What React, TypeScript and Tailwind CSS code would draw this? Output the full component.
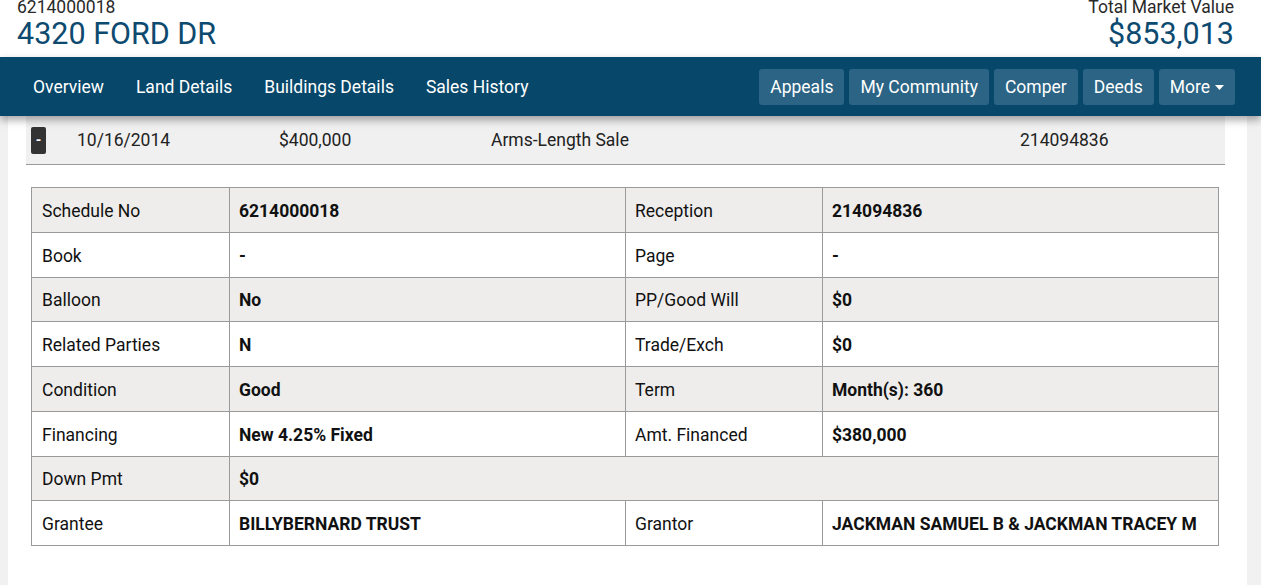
const navTabs = ["Overview", "Land Details", "Buildings Details", "Sales History"];
const navButtons = ["Appeals", "My Community", "Comper", "Deeds"];

type Row = { cells: [string, string] | [string, string, string, string] };

const rows: Row[] = [
  { cells: ["Schedule No", "6214000018", "Reception", "214094836"] },
  { cells: ["Book", "-", "Page", "-"] },
  { cells: ["Balloon", "No", "PP/Good Will", "$0"] },
  { cells: ["Related Parties", "N", "Trade/Exch", "$0"] },
  { cells: ["Condition", "Good", "Term", "Month(s): 360"] },
  { cells: ["Financing", "New 4.25% Fixed", "Amt. Financed", "$380,000"] },
  { cells: ["Down Pmt", "$0"] },
  { cells: ["Grantee", "BILLYBERNARD TRUST", "Grantor", "JACKMAN SAMUEL B & JACKMAN TRACEY M"] },
];

function SaleDetail() {
  return (
    <table className="w-[1187px] table-fixed border-collapse text-[17.5px] text-[#111]">
      <colgroup>
        <col className="w-[198px]" />
        <col className="w-[396px]" />
        <col className="w-[197px]" />
        <col className="w-[396px]" />
      </colgroup>
      <tbody>
        {rows.map((r, i) => (
          <tr key={i} className={i % 2 === 0 ? "bg-[#eeedec]" : "bg-white"}>
            <td className="h-[44.75px] border border-[#9a9a9a] px-[10px] pt-[2px]">{r.cells[0]}</td>
            {r.cells.length === 2 ? (
              <td colSpan={3} className="border border-[#9a9a9a] px-[9px] pt-[2px] font-bold">
                {r.cells[1]}
              </td>
            ) : (
              <>
                <td className="border border-[#9a9a9a] px-[9px] pt-[2px] font-bold">{r.cells[1]}</td>
                <td className="border border-[#9a9a9a] px-[9px] pt-[2px]">{r.cells[2]}</td>
                <td className="whitespace-nowrap border border-[#9a9a9a] px-[9px] pt-[2px] font-bold">
                  {r.cells[3]}
                </td>
              </>
            )}
          </tr>
        ))}
      </tbody>
    </table>
  );
}

export default function App() {
  return (
    <div
      className="h-[585px] w-[1261px] overflow-hidden bg-[#f1f1f1]"
      style={{ fontFamily: "Roboto, 'Liberation Sans', sans-serif" }}
    >
      {/* title strip */}
      <header className="flex h-[57px] items-start justify-between bg-white pl-[17px] pr-[27px]">
        <div className="flex flex-col">
          <span className="mt-[-2px] text-[17.5px] leading-[19px] text-[#2a2a2a]">6214000018</span>
          <span className="text-[30.5px] leading-[33px] text-[#0d4a70]">4320 FORD DR</span>
        </div>
        <div className="flex flex-col items-end">
          <span className="mt-[-2px] text-[17.5px] leading-[19px] text-[#2a2a2a]">Total Market Value</span>
          <span className="text-[30.5px] leading-[33px] text-[#0d4a70]">$853,013</span>
        </div>
      </header>

      {/* nav bar */}
      <nav className="relative z-10 flex h-[59px] items-center justify-between bg-[#06476a] pl-[33px] pr-[26px] shadow-[0_4px_8px_rgba(0,0,0,0.35)]">
        <div className="flex items-center gap-[32px] pt-[2px]">
          {navTabs.map((t) => (
            <span key={t} className="text-[17.5px] text-white">
              {t}
            </span>
          ))}
        </div>
        <div className="flex items-center gap-[5px]">
          {navButtons.map((b) => (
            <span
              key={b}
              className="flex h-[36px] items-center rounded-[3px] bg-[#2b6484] px-[11px] pt-[2px] text-[17.5px] text-white"
            >
              {b}
            </span>
          ))}
          <span className="flex h-[36px] items-center gap-[5px] rounded-[3px] bg-[#2b6484] px-[11px] pt-[2px] text-[17.5px] text-white">
            More
            <svg width="9" height="5" viewBox="0 0 9 5">
              <path d="M0 0h9L4.5 5z" fill="white" />
            </svg>
          </span>
        </div>
      </nav>

      {/* content card */}
      <main className="ml-[8px] h-[469px] w-[1239px] bg-white pl-[18px]">
        <div className="flex h-[49px] w-[1199px] items-center border-b border-[#9a9a9a] bg-[#f0f0f0] text-[17.5px] text-[#222]">
          <span className="ml-[5px] flex h-[27px] w-[15px] items-center justify-center rounded-[2px] bg-[#333] text-[14px] font-bold text-white">
            -
          </span>
          <span className="ml-[31px] w-[202px]">10/16/2014</span>
          <span className="w-[212px]">$400,000</span>
          <span className="w-[529px]">Arms-Length Sale</span>
          <span>214094836</span>
        </div>
        <div className="ml-[5px] mt-[22px]">
          <SaleDetail />
        </div>
      </main>
    </div>
  );
}
